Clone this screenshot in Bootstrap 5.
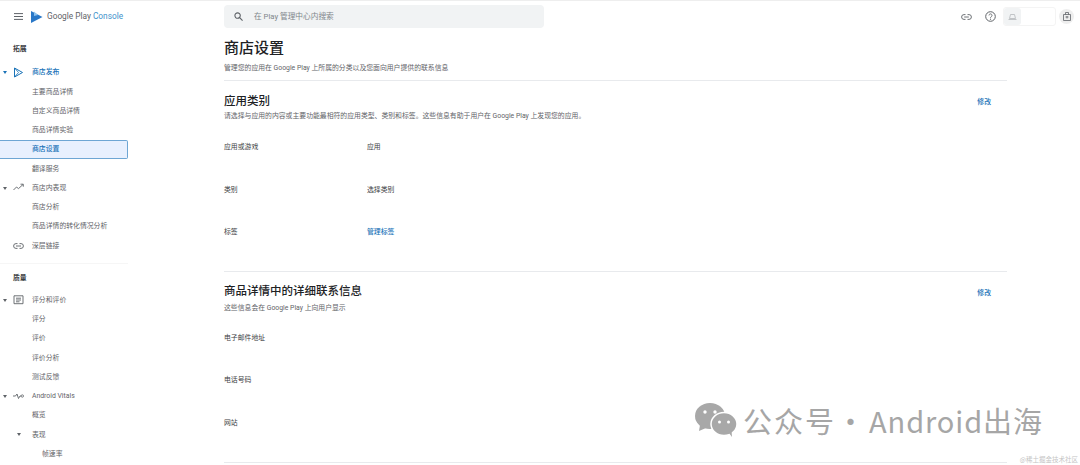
<!doctype html>
<html lang="zh-CN"><head><meta charset="utf-8"><title>商店设置</title>
<link href="https://cdn.jsdelivr.net/npm/bootstrap@5.3.0/dist/css/bootstrap.min.css" rel="stylesheet">
<style>
html,body{height:465px;overflow:hidden;background:#fff}
body{font-family:"Roboto","Noto Sans CJK SC",sans-serif;font-size:6.85px;color:#5f6368;position:relative;border-top:1px solid #eee}
.top-strip{height:31px;padding-top:4px}
.brand-zone{width:224px;padding-left:14px;height:23px}
.brand-word{font-size:8.3px;color:#5f6368;margin-left:4px;white-space:nowrap}
.brand-word span{color:#3f93cc}
.burger{margin-right:8px}
.search-box{width:320px;height:23px;background:#f1f3f4;border-radius:4px;padding-left:10px;color:#80868b;gap:11px;font-size:7.7px}
.tool-zone{margin-left:auto;padding-right:6px;height:23px}
.tool-help{margin-left:13px}
.env-box{width:53px;height:19px;border:1px solid #f4f4f4;border-radius:3px;margin-left:7px}
.env-icon{width:17px;height:17px;background:#f1f3f4;border-radius:3px}
.acct{width:15px;height:15px;background:#eeeeee;border-radius:50%;margin-left:3px}
.side-pane{width:128px;flex:none}
.group-label{font-weight:700;color:#3c4043;padding-left:13px;height:19px}
.group-label.first{margin-top:8px;margin-bottom:4px}
.group-label.second{margin-top:5px;margin-bottom:3px}
.nav-row{height:19.25px;padding-left:32px;white-space:nowrap;color:#5f6368;position:relative}
.nav-row.deep{padding-left:42px}
.nav-row.on{color:#1a73b8;font-weight:500}
.nav-row.sel{color:#1a73b8;font-weight:500;background:#e8f0fe;border:1px solid #6ea6d4;border-left:0;border-radius:0 2px 2px 0;padding-left:32px}
.caret{position:absolute;left:3px;top:8px;width:0;height:0;border-left:2.5px solid transparent;border-right:2.5px solid transparent;border-top:3px solid #5f6368}
.caret.blue{border-top-color:#1a73b8}
.caret.inner{left:17px}
.ico{position:absolute;left:13px;top:4px}
.ico-link{top:7px}
.ico-vitals{top:6px}
.sep{height:1px;background:#f6f6f6;margin-top:7px}
.main-pane{width:783px;margin-left:96px;flex:none}
.page-title{font-size:15px;line-height:20px;color:#202124;font-weight:500;margin:6px 0 0}
.hint{line-height:10px;color:#5f6368;white-space:nowrap}
.lead-hint{margin-top:5px}
.rule{height:1px;background:#e8eaed}
.rule-top{margin-top:7px}
.sec-head{margin-top:12px}
.sec-head.second{margin-top:11px}
.sec-title{font-size:11.5px;line-height:16px;font-weight:500;color:#202124;margin:0}
.edit-link{color:#1a73b8;font-weight:500;margin-right:16px;margin-top:4px}
.second .edit-link{margin-top:5px}
.hint-a{margin-top:2px}
.hint-b{margin-top:4px}
.kv-wrap{margin-top:21px;padding-bottom:1px}
.kv-wrap.lower{margin-top:20px;padding-bottom:2px}
.kv-row{height:42.5px;display:flex;color:#3c4043}
.kv-key{width:143px}
.kv-link{color:#1a73b8;font-weight:500}
.mark-layer{position:absolute;left:694px;top:401px;color:#a6a6a6;font-size:29px;line-height:36px;white-space:nowrap;font-family:"Noto Sans CJK SC",sans-serif}
.mark-word{margin-left:5px;letter-spacing:2px}
.mark-dot{width:29px}
.mark-name{letter-spacing:.9px;margin-left:4px}
.mark-foot{position:absolute;right:2px;top:454px;font-size:6.5px;color:#c4c4c4;font-family:"Noto Sans CJK SC",serif}
</style></head>
<body>
<div class="d-flex align-items-start top-strip">
 <div class="brand-zone d-flex align-items-center">
  <svg class="burger" width="9" height="7" viewBox="0 0 9 7"><path d="M0 .6h9M0 3.500h9M0 6.400h9" stroke="#5f6368" stroke-width="1"/></svg>
  <svg width="12" height="12" viewBox="0 0 12 12"><path d="M0 0l11.500 6L0 12z" fill="#2a78c8"/><path d="M3 .5l4 3.500-4 1z" fill="#8fc3ee"/></svg>
  <span class="brand-word">Google Play <span>Console</span></span>
 </div>
 <div class="search-box d-flex align-items-center">
  <svg width="9" height="9" viewBox="0 0 10 10"><circle cx="4" cy="4" r="3" fill="none" stroke="#5f6368" stroke-width="1.200"/><path d="M6.300 6.300L9.500 9.500" stroke="#5f6368" stroke-width="1.300"/></svg>
  <span>在 Play 管理中心内搜索</span>
 </div>
 <div class="tool-zone d-flex align-items-center">
  <svg width="11" height="6" viewBox="0 0 11 6"><path d="M4.500.6H3a2.400 2.400 0 0 0 0 4.800h1.500M6.500.6H8a2.400 2.400 0 0 1 0 4.800H6.500M3.200 3h4.600" fill="none" stroke="#5f6368" stroke-width=".9"/></svg>
  <svg class="tool-help" width="11" height="11" viewBox="0 0 11 11"><circle cx="5.500" cy="5.500" r="4.800" fill="none" stroke="#5f6368"/><path d="M4 4.400a1.500 1.500 0 1 1 2.300 1.300c-.6.400-.8.700-.8 1.200" fill="none" stroke="#5f6368" stroke-width=".9"/><circle cx="5.500" cy="8.200" r=".6" fill="#5f6368"/></svg>
  <div class="env-box d-flex align-items-center"><div class="env-icon d-flex align-items-center justify-content-center"><svg width="9" height="6" viewBox="0 0 9 6"><path d="M2.500.5h4l1 4h-6zM.5 5.500h8" fill="none" stroke="#b5b8bb" stroke-width=".8"/></svg></div></div>
  <div class="acct d-flex align-items-center justify-content-center"><svg width="8" height="9" viewBox="0 0 8 9"><path d="M.5 2.500h7v6h-7zM2.500 2.500V.5h3v2M4 4v2.500M2.500 5h3" fill="none" stroke="#5f6368" stroke-width=".8"/></svg></div>
 </div>
</div>
<div class="d-flex">
 <nav class="side-pane">
  <div class="group-label first d-flex align-items-center">拓展</div>
  <div class="nav-row on d-flex align-items-center"><i class="caret blue"></i><svg class="ico" width="11" height="11" viewBox="0 0 11 11"><path d="M1.500 1v9l8-4.500z" fill="none" stroke="#1a73b8"/><path d="M1.500 1L5.500 5.500 1.500 10" fill="none" stroke="#1a73b8" stroke-width=".8"/></svg>商店发布</div>
  <div class="nav-row d-flex align-items-center">主要商品详情</div>
  <div class="nav-row d-flex align-items-center">自定义商品详情</div>
  <div class="nav-row d-flex align-items-center">商品详情实验</div>
  <div class="nav-row sel d-flex align-items-center">商店设置</div>
  <div class="nav-row d-flex align-items-center">翻译服务</div>
  <div class="nav-row d-flex align-items-center"><i class="caret"></i><svg class="ico" width="11" height="9" viewBox="0 0 11 9"><path d="M.5 7l3-3 2 1.600L10 1.500M7.500 1.200h2.800v2.500" fill="none" stroke="#5f6368" stroke-width=".9"/></svg>商店内表现</div>
  <div class="nav-row d-flex align-items-center">商店分析</div>
  <div class="nav-row d-flex align-items-center">商品详情的转化情况分析</div>
  <div class="nav-row d-flex align-items-center"><svg class="ico ico-link" width="11" height="6" viewBox="0 0 11 6"><path d="M4.500.6H3a2.400 2.400 0 0 0 0 4.800h1.500M6.500.6H8a2.400 2.400 0 0 1 0 4.800H6.500M3 3h5" fill="none" stroke="#5f6368" stroke-width=".9"/></svg>深层链接</div>
  <div class="sep"></div>
  <div class="group-label second d-flex align-items-center">质量</div>
  <div class="nav-row d-flex align-items-center"><i class="caret"></i><svg class="ico" width="11" height="10" viewBox="0 0 11 10"><path d="M1 .8h9v7.900H1zM3 3.200h5M3 5h5M3 6.800h3.500" fill="none" stroke="#5f6368" stroke-width=".9"/></svg>评分和评价</div>
  <div class="nav-row d-flex align-items-center">评分</div>
  <div class="nav-row d-flex align-items-center">评价</div>
  <div class="nav-row d-flex align-items-center">评价分析</div>
  <div class="nav-row d-flex align-items-center">测试反馈</div>
  <div class="nav-row d-flex align-items-center"><i class="caret"></i><svg class="ico ico-vitals" width="11" height="7" viewBox="0 0 11 7"><path d="M0 3h2.500l1.500-2 1.500 4.500L7 3h1" fill="none" stroke="#5f6368" stroke-width=".9"/><circle cx="9.300" cy="3" r="1.200" fill="none" stroke="#5f6368" stroke-width=".8"/></svg>Android Vitals</div>
  <div class="nav-row d-flex align-items-center">概览</div>
  <div class="nav-row d-flex align-items-center"><i class="caret inner"></i>表现</div>
  <div class="nav-row deep d-flex align-items-center">帧速率</div>
 </nav>
 <main class="main-pane">
  <h1 class="page-title">商店设置</h1>
  <div class="hint lead-hint">管理您的应用在 Google Play 上所属的分类以及您面向用户提供的联系信息</div>
  <div class="rule rule-top"></div>
  <div class="sec-head d-flex justify-content-between align-items-start"><h2 class="sec-title">应用类别</h2><a class="edit-link text-decoration-none">修改</a></div>
  <div class="hint hint-a">请选择与应用的内容或主要功能最相符的应用类型、类别和标签。这些信息有助于用户在 Google Play 上发现您的应用。</div>
  <div class="kv-wrap">
   <div class="kv-row"><div class="kv-key">应用或游戏</div><div>应用</div></div>
   <div class="kv-row"><div class="kv-key">类别</div><div>选择类别</div></div>
   <div class="kv-row"><div class="kv-key">标签</div><div class="kv-link">管理标签</div></div>
  </div>
  <div class="rule"></div>
  <div class="sec-head second d-flex justify-content-between align-items-start"><h2 class="sec-title">商品详情中的详细联系信息</h2><a class="edit-link text-decoration-none">修改</a></div>
  <div class="hint hint-b">这些信息会在 Google Play 上向用户显示</div>
  <div class="kv-wrap lower">
   <div class="kv-row"><div class="kv-key">电子邮件地址</div></div>
   <div class="kv-row"><div class="kv-key">电话号码</div></div>
   <div class="kv-row"><div class="kv-key">网站</div></div>
  </div>
  <div class="rule"></div>
 </main>
</div>
<div class="mark-layer d-flex align-items-center">
 <svg width="44" height="36" viewBox="0 0 44 36"><ellipse cx="16" cy="14" rx="15" ry="13" fill="#a8a8a8"/><path d="M6 23l-1 6 7-3z" fill="#a8a8a8"/><ellipse cx="30" cy="22" rx="13" ry="11.500" fill="#a8a8a8" stroke="#fff" stroke-width="1.500"/><path d="M35 31l3 4-.5-6z" fill="#a8a8a8"/><circle cx="11" cy="10" r="1.700" fill="#fff"/><circle cx="21" cy="10" r="1.700" fill="#fff"/><circle cx="25.500" cy="20" r="1.500" fill="#fff"/><circle cx="34.500" cy="20" r="1.500" fill="#fff"/></svg>
 <span class="mark-word">公众号</span><span class="mark-dot">·</span><span class="mark-name">Android出海</span>
</div>
<div class="mark-foot">@稀土掘金技术社区</div>
</body></html>
